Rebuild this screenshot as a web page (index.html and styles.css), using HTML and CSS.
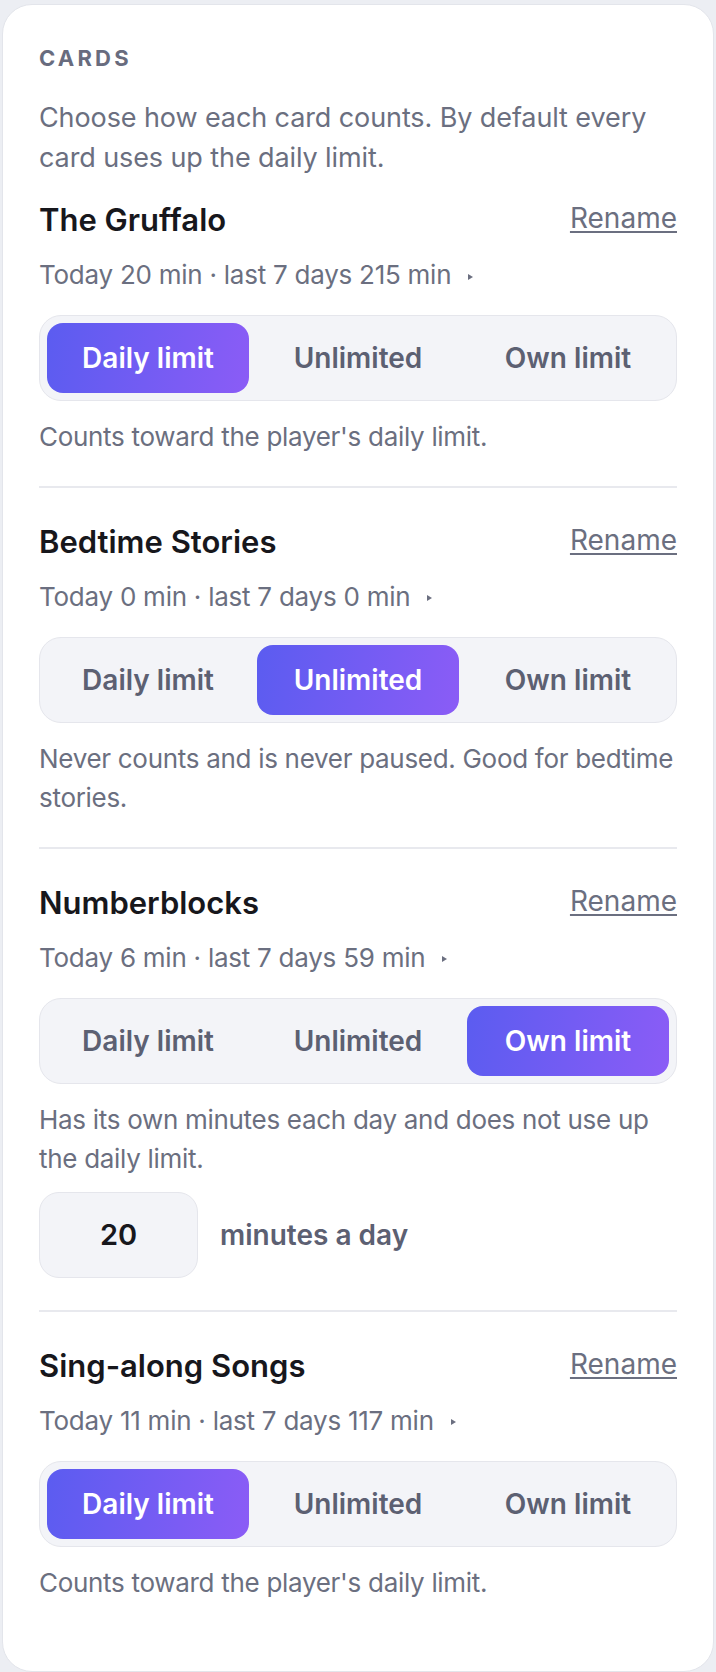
FILE: index.html
```html
<!DOCTYPE html>
<html lang="en">
<head>
<meta charset="utf-8">
<title>Cards</title>
<link rel="stylesheet" href="styles.css">
</head>
<body>
<div class="page">
  <section class="panel">
    <h2 class="label">Cards</h2>
    <p class="intro">Choose how each card counts. By default every card uses up the daily limit.</p>

    <div class="item">
      <div class="item-head">
        <h3 class="title">The Gruffalo</h3>
        <a class="rename" href="#">Rename</a>
      </div>
      <p class="meta">Today 20 min · last 7 days 215 min<span class="caret"></span></p>
      <div class="seg">
        <button class="seg-btn is-active">Daily limit</button>
        <button class="seg-btn">Unlimited</button>
        <button class="seg-btn">Own limit</button>
      </div>
      <p class="desc">Counts toward the player's daily limit.</p>
    </div>

    <div class="item">
      <div class="item-head">
        <h3 class="title">Bedtime Stories</h3>
        <a class="rename" href="#">Rename</a>
      </div>
      <p class="meta">Today 0 min · last 7 days 0 min<span class="caret"></span></p>
      <div class="seg">
        <button class="seg-btn">Daily limit</button>
        <button class="seg-btn is-active">Unlimited</button>
        <button class="seg-btn">Own limit</button>
      </div>
      <p class="desc">Never counts and is never paused. Good for bedtime stories.</p>
    </div>

    <div class="item">
      <div class="item-head">
        <h3 class="title">Numberblocks</h3>
        <a class="rename" href="#">Rename</a>
      </div>
      <p class="meta">Today 6 min · last 7 days 59 min<span class="caret"></span></p>
      <div class="seg">
        <button class="seg-btn">Daily limit</button>
        <button class="seg-btn">Unlimited</button>
        <button class="seg-btn is-active">Own limit</button>
      </div>
      <p class="desc">Has its own minutes each day and does not use up the daily limit.</p>
      <div class="own">
        <div class="own-input">20</div>
        <span class="own-label">minutes a day</span>
      </div>
    </div>

    <div class="item">
      <div class="item-head">
        <h3 class="title">Sing-along Songs</h3>
        <a class="rename" href="#">Rename</a>
      </div>
      <p class="meta">Today 11 min · last 7 days 117 min<span class="caret"></span></p>
      <div class="seg">
        <button class="seg-btn is-active">Daily limit</button>
        <button class="seg-btn">Unlimited</button>
        <button class="seg-btn">Own limit</button>
      </div>
      <p class="desc">Counts toward the player's daily limit.</p>
    </div>
  </section>
</div>
</body>
</html>
```

FILE: styles.css
```css
* { box-sizing: border-box; }

html, body {
  margin: 0;
  padding: 0;
  background: #eceef3;
}

body {
  font-family: Inter, "Noto Sans", "Liberation Sans", sans-serif;
  color: #6b6f80;
}

.page {
  padding: 4px 2px 6px 2px;
}

.panel {
  background: #ffffff;
  border: 1px solid #e3e5eb;
  border-radius: 30px;
  padding: 40px 36px 36px 36px;
}

.label {
  margin: 0;
  font-size: 22px;
  line-height: 26px;
  font-weight: 700;
  letter-spacing: 0.145em;
  text-transform: uppercase;
  color: #686c7e;
}

.intro {
  margin: 27px 0 0 0;
  font-size: 27px;
  line-height: 39.5px;
  letter-spacing: -0.1px;
  color: #6b6f80;
}

.item {
  padding: 25px 0 29px 0;
}

.item + .item {
  border-top: 2px solid #e8e9ee;
  padding-top: 36px;
}

.item:last-child {
  padding-bottom: 33px;
}

.item-head {
  display: flex;
  justify-content: space-between;
  align-items: flex-start;
}

.title {
  margin: 0;
  font-size: 31px;
  line-height: 36px;
  font-weight: 600;
  color: #17171c;
}

.rename {
  font-size: 28px;
  line-height: 32px;
  color: #6b6f80;
  text-decoration: underline;
  text-underline-offset: 3px;
  text-decoration-thickness: 2px;
}

.meta {
  margin: 19px 0 0 0;
  font-size: 26px;
  line-height: 36px;
  letter-spacing: -0.25px;
  color: #6b6f80;
}

.caret {
  display: inline-block;
  width: 0;
  height: 0;
  margin-left: 17px;
  border-left: 5px solid #6b6f80;
  border-top: 3.5px solid transparent;
  border-bottom: 3.5px solid transparent;
  vertical-align: middle;
}

.seg {
  margin-top: 22px;
  display: grid;
  grid-template-columns: repeat(3, 1fr);
  gap: 8px;
  padding: 7px;
  background: #f3f4f8;
  border: 1px solid #e5e6ec;
  border-radius: 22px;
}

.seg-btn {
  height: 70px;
  border: 0;
  border-radius: 16px;
  background: transparent;
  font-family: inherit;
  font-size: 28px;
  font-weight: 600;
  color: #5c6072;
  padding: 0;
}

.seg-btn.is-active {
  background: linear-gradient(100deg, #5b5cf0 0%, #8b5cf6 100%);
  color: #ffffff;
}

.desc {
  margin: 16px 0 0 0;
  font-size: 26px;
  line-height: 39.5px;
  letter-spacing: -0.3px;
  color: #6b6f80;
}

.own {
  margin-top: 13px;
  margin-bottom: 3px;
  display: flex;
  align-items: center;
  gap: 22px;
}

.own-input {
  width: 159px;
  height: 86px;
  display: flex;
  align-items: center;
  justify-content: center;
  background: #f3f4f8;
  border: 1px solid #e5e6ec;
  border-radius: 20px;
  font-size: 29px;
  font-weight: 600;
  color: #17171c;
}

.own-label {
  font-size: 28px;
  font-weight: 600;
  color: #5c6072;
}
```
